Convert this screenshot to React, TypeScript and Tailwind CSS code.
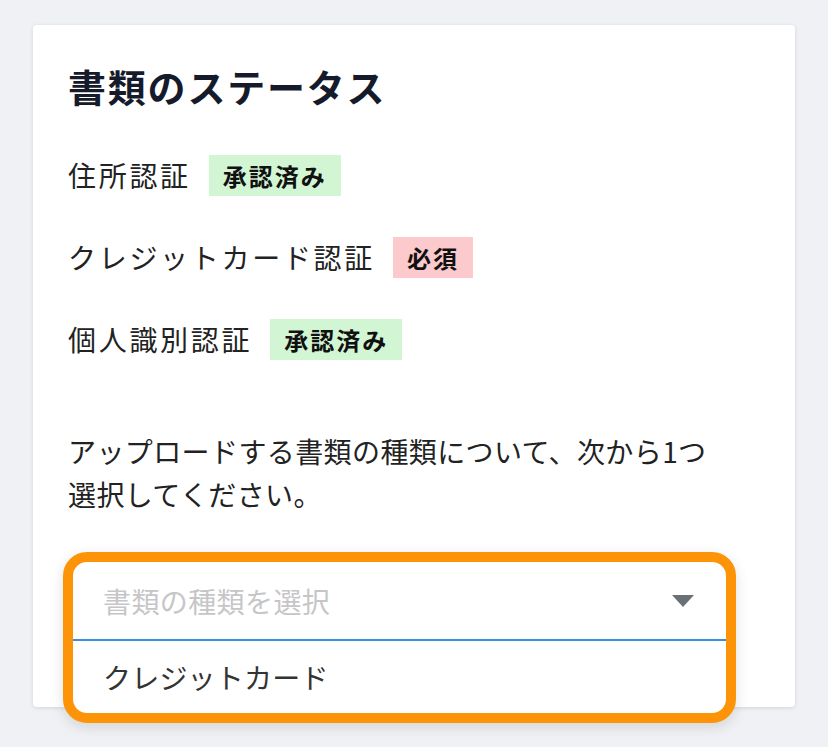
import React from "react";

const font = { fontFamily: '"Noto Sans CJK JP", "Noto Sans", sans-serif' };

function Badge({ text, tone }: { text: string; tone: "ok" | "req" }) {
  return (
    <span
      className={`inline-block h-[41px] px-[14px] text-[24px] font-bold leading-[41px] tracking-[2px] text-[#111] ${
        tone === "ok" ? "bg-[#d2f6d4]" : "bg-[#fcc9cc]"
      }`}
    >
      {text}
    </span>
  );
}

function Row({ label, badge, tone }: { label: string; badge: string; tone: "ok" | "req" }) {
  return (
    <div className="flex h-[41px] items-center gap-[18px]">
      <span className="text-[28px] leading-[41px] tracking-[2.7px] text-[#222]">{label}</span>
      <Badge text={badge} tone={tone} />
    </div>
  );
}

export default function App() {
  return (
    <div className="min-h-[747px] w-[828px] overflow-hidden bg-[#eff1f5] pl-[33px] pt-[25px]" style={font}>
      <div className="h-[682px] w-[762px] rounded-[4px] bg-white pl-[35px] pt-[38px] shadow-[0_1px_4px_rgba(0,0,0,0.12)]">
        <h1 className="text-[38px] font-bold leading-[46px] tracking-[1.8px] text-[#161b2b]">書類のステータス</h1>
        <div className="mt-[46px] flex flex-col gap-[41px]">
          <Row label="住所認証" badge="承認済み" tone="ok" />
          <Row label="クレジットカード認証" badge="必須" tone="req" />
          <Row label="個人識別認証" badge="承認済み" tone="ok" />
        </div>
        <p className="mt-[70px] w-[665px] text-[28px] leading-[43px] tracking-[0.4px] text-[#222]">
          アップロードする書類の種類について、次から1つ選択してください。
        </p>
        <div className="ml-[-5px] mt-[36px] w-[673px] rounded-[24px] border-[10px] border-[#fd9408] bg-white shadow-[0_4px_14px_rgba(0,0,0,0.12)]">
          <div className="flex h-[79px] items-center justify-between border-b-[2px] border-[#3a8fdc] pl-[30px] pr-[32px]">
            <span className="text-[28px] tracking-[0.4px] text-[#c6c6c8]">書類の種類を選択</span>
            <svg width="22" height="12" viewBox="0 0 22 12">
              <path d="M0 0 H22 L11 12 Z" fill="#6b6f76" />
            </svg>
          </div>
          <div className="flex h-[72px] items-center pl-[30px]">
            <span className="text-[28px] tracking-[0.2px] text-[#333]">クレジットカード</span>
          </div>
        </div>
      </div>
    </div>
  );
}
